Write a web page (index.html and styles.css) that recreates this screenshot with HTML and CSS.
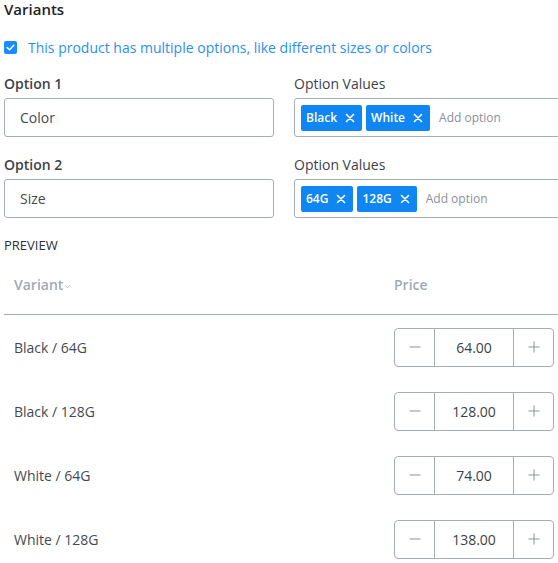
FILE: index.html
```html
<!DOCTYPE html>
<html>
<head>
<meta charset="utf-8">
<link rel="stylesheet" href="styles.css">
</head>
<body>
<div class="page">
  <h2 class="title">Variants</h2>
  <label class="check-row">
    <span class="checkbox"><svg viewBox="0 0 13 13" width="13" height="13"><path d="M3.2 6.6 L5.5 8.8 L9.8 4.3" fill="none" stroke="#fff" stroke-width="1.5" stroke-linecap="round" stroke-linejoin="round"/></svg></span>
    <span class="check-text">This product has multiple options, like different sizes or colors</span>
  </label>

  <div class="options">
    <div class="field">
      <div class="label strong">Option 1</div>
      <div class="input">Color</div>
    </div>
    <div class="field">
      <div class="label">Option Values</div>
      <div class="input tags">
        <span class="tag">Black<svg class="x" viewBox="0 0 10 10" width="10" height="10"><path d="M1.5 1.5 L8.5 8.5 M8.5 1.5 L1.5 8.5" stroke="#fff" stroke-width="1.6" stroke-linecap="round"/></svg></span>
        <span class="tag">White<svg class="x" viewBox="0 0 10 10" width="10" height="10"><path d="M1.5 1.5 L8.5 8.5 M8.5 1.5 L1.5 8.5" stroke="#fff" stroke-width="1.6" stroke-linecap="round"/></svg></span>
        <span class="placeholder">Add option</span>
      </div>
    </div>
    <div class="field">
      <div class="label strong">Option 2</div>
      <div class="input">Size</div>
    </div>
    <div class="field">
      <div class="label">Option Values</div>
      <div class="input tags">
        <span class="tag">64G<svg class="x" viewBox="0 0 10 10" width="10" height="10"><path d="M1.5 1.5 L8.5 8.5 M8.5 1.5 L1.5 8.5" stroke="#fff" stroke-width="1.6" stroke-linecap="round"/></svg></span>
        <span class="tag">128G<svg class="x" viewBox="0 0 10 10" width="10" height="10"><path d="M1.5 1.5 L8.5 8.5 M8.5 1.5 L1.5 8.5" stroke="#fff" stroke-width="1.6" stroke-linecap="round"/></svg></span>
        <span class="placeholder">Add option</span>
      </div>
    </div>
  </div>

  <div class="preview">PREVIEW</div>

  <div class="table">
    <div class="thead">
      <div class="col-variant">Variant<svg class="caret" viewBox="0 0 8 6" width="7" height="5"><path d="M1 1.5 L4 4.5 L7 1.5" fill="none" stroke="#a3a9b4" stroke-width="1"/></svg></div>
      <div class="col-price">Price</div>
    </div>
    <div class="row">
      <div class="col-variant">Black / 64G</div>
      <div class="col-price"><div class="stepper"><span class="btn"><svg viewBox="0 0 12 12" width="12" height="12"><path d="M0.5 6 H11.5" stroke="#8c919a" stroke-width="1"/></svg></span><span class="val">64.00</span><span class="btn"><svg viewBox="0 0 12 12" width="12" height="12"><path d="M0.5 6 H11.5 M6 0.5 V11.5" stroke="#8c919a" stroke-width="1"/></svg></span></div></div>
    </div>
    <div class="row">
      <div class="col-variant">Black / 128G</div>
      <div class="col-price"><div class="stepper"><span class="btn"><svg viewBox="0 0 12 12" width="12" height="12"><path d="M0.5 6 H11.5" stroke="#8c919a" stroke-width="1"/></svg></span><span class="val">128.00</span><span class="btn"><svg viewBox="0 0 12 12" width="12" height="12"><path d="M0.5 6 H11.5 M6 0.5 V11.5" stroke="#8c919a" stroke-width="1"/></svg></span></div></div>
    </div>
    <div class="row">
      <div class="col-variant">White / 64G</div>
      <div class="col-price"><div class="stepper"><span class="btn"><svg viewBox="0 0 12 12" width="12" height="12"><path d="M0.5 6 H11.5" stroke="#8c919a" stroke-width="1"/></svg></span><span class="val">74.00</span><span class="btn"><svg viewBox="0 0 12 12" width="12" height="12"><path d="M0.5 6 H11.5 M6 0.5 V11.5" stroke="#8c919a" stroke-width="1"/></svg></span></div></div>
    </div>
    <div class="row">
      <div class="col-variant">White / 128G</div>
      <div class="col-price"><div class="stepper"><span class="btn"><svg viewBox="0 0 12 12" width="12" height="12"><path d="M0.5 6 H11.5" stroke="#8c919a" stroke-width="1"/></svg></span><span class="val">138.00</span><span class="btn"><svg viewBox="0 0 12 12" width="12" height="12"><path d="M0.5 6 H11.5 M6 0.5 V11.5" stroke="#8c919a" stroke-width="1"/></svg></span></div></div>
    </div>
  </div>
</div>
</body>
</html>
```

FILE: styles.css
```css
html, body {
  margin: 0;
  padding: 0;
  background: #fff;
  overflow: hidden;
}
body {
  font-family: "Open Sans", "Noto Sans", sans-serif;
  color: #3a3f47;
  font-size: 14px;
}
.page {
  width: 600px;
  padding-left: 4px;
}
.title {
  margin: 0;
  font-size: 15px;
  font-weight: 600;
  line-height: 18px;
  color: #1f2329;
}
.check-row {
  display: flex;
  align-items: center;
  height: 20px;
  margin-top: 19px;
  gap: 11px;
}
.checkbox {
  width: 13px;
  height: 13px;
  border-radius: 2px;
  background: #1a8cff;
  display: flex;
}
.check-text {
  color: #2b8ff0;
  font-size: 14px;
}
.options {
  display: grid;
  grid-template-columns: 270px 280px;
  column-gap: 20px;
  row-gap: 18px;
  margin-top: 17px;
}
.label {
  line-height: 20px;
  font-size: 14px;
  color: #3d424a;
  margin-bottom: 4px;
}
.label.strong {
  font-weight: 600;
}
.input {
  box-sizing: border-box;
  height: 39px;
  border: 1px solid #a7adb8;
  border-radius: 3px;
  padding-left: 15px;
  display: flex;
  align-items: center;
  color: #444950;
  font-size: 14px;
}
.input.tags {
  padding-left: 6px;
  gap: 4px;
}
.tag {
  display: inline-flex;
  align-items: center;
  height: 26px;
  padding: 0 7px 0 5px;
  gap: 8px;
  background: #0f86f2;
  color: #fff;
  font-size: 12px;
  font-weight: 600;
  border-radius: 2px;
}
.placeholder {
  margin-left: 5px;
  color: #8b9099;
  font-size: 12px;
}
.preview {
  margin-top: 18px;
  line-height: 18px;
  font-size: 13px;
  color: #2b3037;
}
.table {
  width: 560px;
}
.thead {
  display: flex;
  padding-top: 21px;
  padding-bottom: 19px;
  line-height: 20px;
  border-bottom: 1px solid #a3a9b3;
  color: #a3a9b4;
  font-weight: 600;
  font-size: 14px;
}
.col-variant {
  width: 380px;
  padding-left: 10px;
  display: flex;
  align-items: center;
}
.caret {
  margin-left: 1px;
  margin-top: 2px;
}
.col-price {
  display: flex;
  align-items: center;
}
.row {
  display: flex;
  height: 64px;
  align-items: center;
  color: #454a52;
  font-size: 14px;
}
.stepper {
  box-sizing: border-box;
  display: flex;
  height: 39px;
  width: 160px;
  border: 1px solid #a7adb8;
  border-radius: 4px;
}
.stepper .btn {
  width: 39px;
  display: flex;
  align-items: center;
  justify-content: center;
}
.stepper .val {
  flex: 1;
  border-left: 1px solid #a7adb8;
  border-right: 1px solid #a7adb8;
  display: flex;
  align-items: center;
  justify-content: center;
  color: #3d424a;
  font-size: 14px;
}
```
